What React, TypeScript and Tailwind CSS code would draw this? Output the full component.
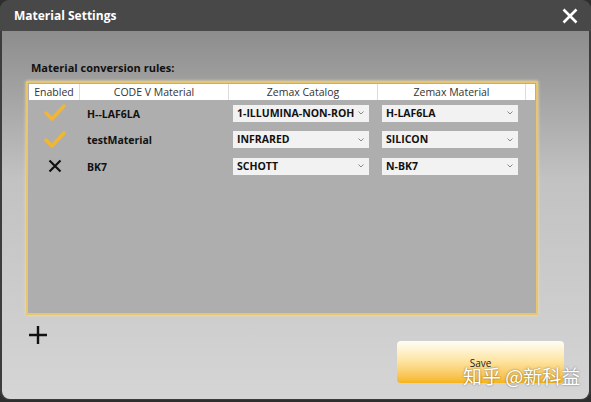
import React from "react";

interface Rule {
  enabled: boolean;
  code: string;
  catalog: string;
  material: string;
}

const rules: Rule[] = [
  { enabled: true, code: "H--LAF6LA", catalog: "1-ILLUMINA-NON-ROHS", material: "H-LAF6LA" },
  { enabled: true, code: "testMaterial", catalog: "INFRARED", material: "SILICON" },
  { enabled: false, code: "BK7", catalog: "SCHOTT", material: "N-BK7" },
];

function Check() {
  return (
    <svg width="22" height="18" viewBox="0 0 22 18">
      <path d="M2 9 L8 15 L20 2" fill="none" stroke="#f2b632" strokeWidth="3.4" strokeLinecap="round" strokeLinejoin="round" />
    </svg>
  );
}

function Cross() {
  return (
    <svg width="14" height="14" viewBox="0 0 14 14">
      <path d="M1.5 1.5 L12.5 12.5 M12.5 1.5 L1.5 12.5" stroke="#111" strokeWidth="2.2" />
    </svg>
  );
}

function Select({ value }: { value: string }) {
  return (
    <div className="w-[136px] h-[17px] bg-[#f2f2f2] flex items-center pl-[4px] pr-[5px] overflow-hidden">
      <span className="flex-1 overflow-hidden whitespace-nowrap text-[10.5px] font-bold text-[#111] leading-[17px]">{value}</span>
      <svg width="6" height="4" viewBox="0 0 6 4" className="shrink-0 ml-1">
        <path d="M0.5 0.5 L3 3 L5.5 0.5" fill="none" stroke="#888" strokeWidth="1" />
      </svg>
    </div>
  );
}

export default function App() {
  return (
    <div className="w-[591px] h-[402px] bg-[#2e2e2e] font-['Open_Sans','Liberation_Sans',sans-serif]">
      <div className="w-full h-[400px] rounded-[9px] overflow-hidden flex flex-col bg-[#3c3c3c]">
        {/* title bar */}
        <div className="h-[31px] bg-[#484848] flex items-center justify-between pl-[14px] pr-[13px] shrink-0">
          <span className="text-white font-bold text-[12px]">Material Settings</span>
          <svg width="16" height="16" viewBox="0 0 16 16">
            <path d="M1.5 1.5 L14.5 14.5 M14.5 1.5 L1.5 14.5" stroke="#fff" strokeWidth="2.6" />
          </svg>
        </div>

        {/* body */}
        <div className="flex-1 mx-[2px] mb-[1px] rounded-b-[8px] bg-gradient-to-b from-[#8d8d8d] via-[#c2c2c2] via-40% to-[#d5d5d5] pl-[24px] pr-[51px] pt-[30px] flex flex-col">
          <div className="text-[11px] font-bold text-[#111] pl-[5px] h-[20px] leading-[14px]">Material conversion rules:</div>

          <div className="h-[234px] border-2 border-[#e8c66e] shadow-[0_0_3px_#f3dfa0] bg-[#aeaeae] p-[1px] flex flex-col">
            <div className="h-[16px] bg-white flex text-[10.5px] text-[#333] leading-[16px] text-center shrink-0">
              <div className="w-[51px] border-r border-[#dcdcdc]">Enabled</div>
              <div className="w-[149px] border-r border-[#dcdcdc]">CODE V Material</div>
              <div className="w-[149px] border-r border-[#dcdcdc]">Zemax Catalog</div>
              <div className="w-[148px] border-r border-[#dcdcdc]">Zemax Material</div>
              <div className="flex-1" />
            </div>
            {rules.map((r) => (
              <div key={r.code} className="h-[26.5px] flex items-center">
                <div className="w-[51px] flex justify-center">{r.enabled ? <Check /> : <Cross />}</div>
                <div className="w-[149px] pl-[7px] text-[10.5px] font-bold text-[#111] leading-[17px] pt-[2px]">{r.code}</div>
                <div className="w-[149px] pl-[4px]">
                  <Select value={r.catalog} />
                </div>
                <div className="w-[148px] pl-[4px]">
                  <Select value={r.material} />
                </div>
              </div>
            ))}
          </div>

          <div className="flex justify-between items-start">
            <svg width="20" height="20" viewBox="0 0 20 20" className="mt-[10px] ml-[2px]">
              <path d="M10 1 V19 M1 10 H19" stroke="#111" strokeWidth="2.4" />
            </svg>
            <div className="relative mt-[26px] mr-[-26px]">
              <button className="w-[167px] h-[42px] rounded-[4px] bg-gradient-to-b from-[#fffdf6] via-[#fde39c] to-[#f6b512] text-[10px] text-[#222] pt-[2px]">
                Save
              </button>
              <span className="absolute left-[66px] top-[24px] whitespace-nowrap text-[19px] leading-[22px] text-white [text-shadow:0_0_2px_rgba(0,0,0,0.55)] font-['Noto_Sans_CJK_SC',sans-serif]">
                知乎 @新科益
              </span>
            </div>
          </div>
        </div>
      </div>
    </div>
  );
}
